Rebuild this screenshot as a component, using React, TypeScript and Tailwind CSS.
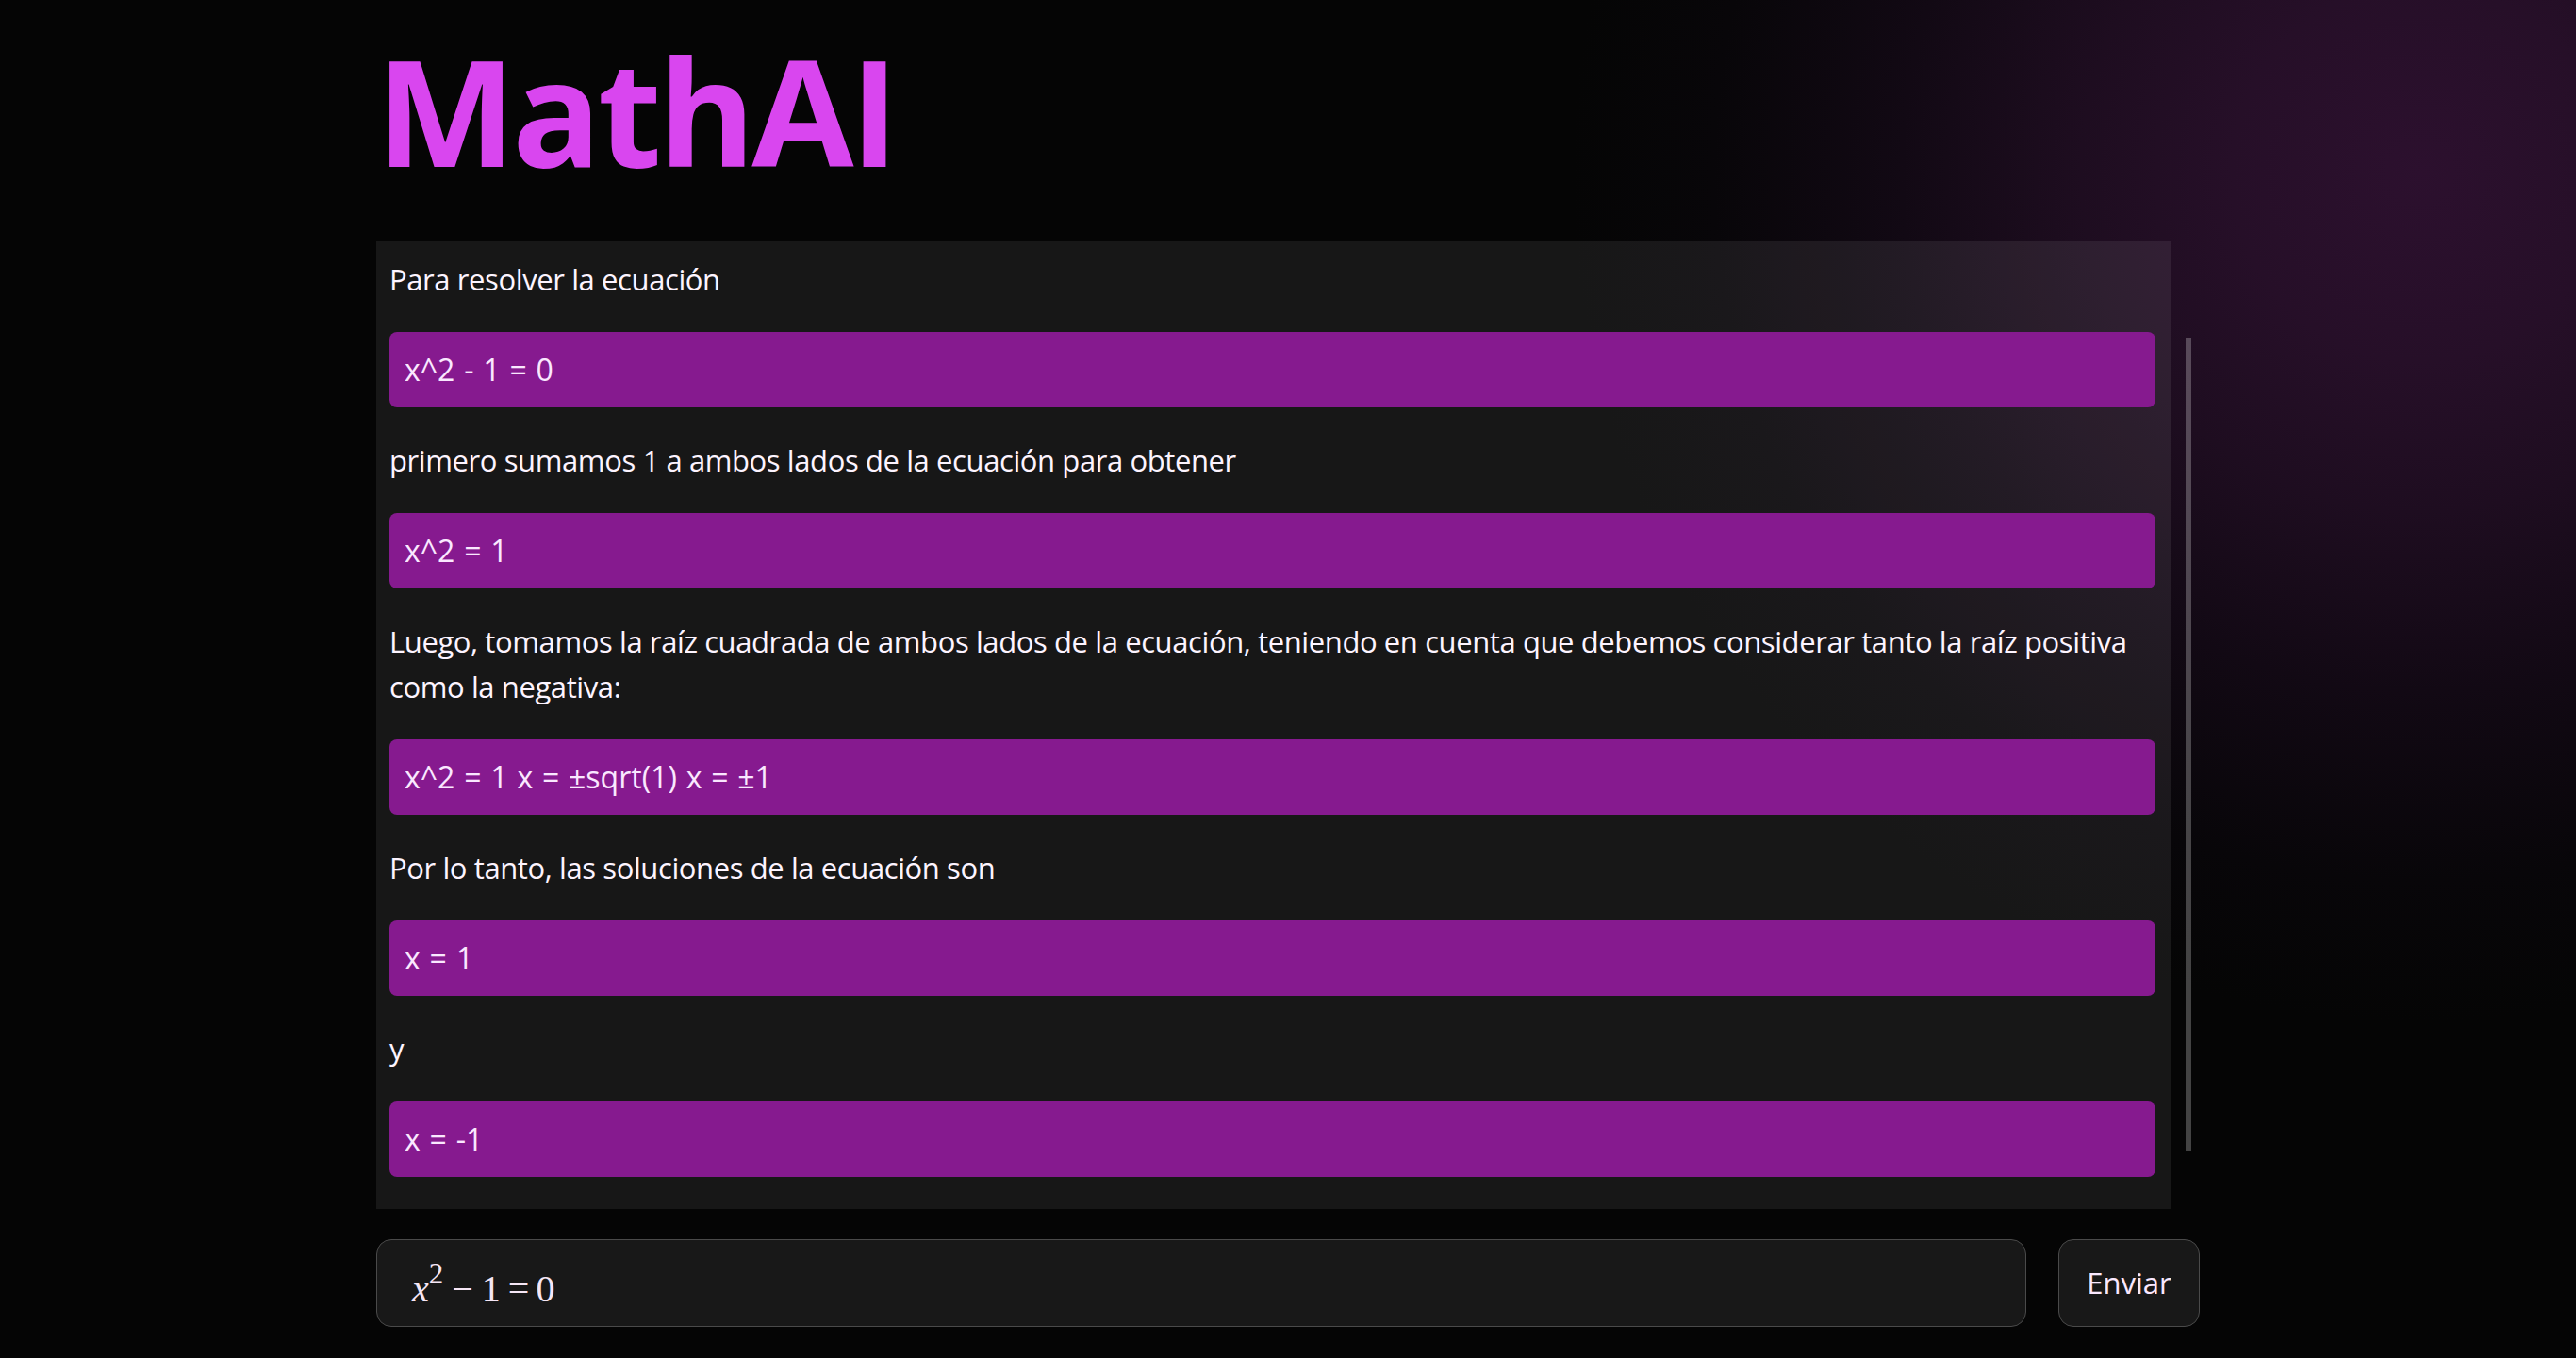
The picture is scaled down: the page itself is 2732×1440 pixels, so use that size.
import React from "react";

const Para = ({ children }: { children: React.ReactNode }) => (
  <p className="my-8 text-[31px] leading-[48px] tracking-[-0.4px] text-[#fdf4ff]">{children}</p>
);

const Code = ({ children }: { children: React.ReactNode }) => (
  <div className="my-8 rounded-lg bg-[#861a8f] py-4 pl-4 text-[32px] leading-[48px] tracking-[0px] text-[#fae8ff] [word-spacing:1.5px]">
    {children}
  </div>
);

export default function App() {
  return (
    <div
      className="min-h-screen w-full bg-[#050505]"
      style={{
        backgroundImage:
          "radial-gradient(circle at 2567px 183px, rgba(44,16,46,1) 0px, rgba(38,15,40,1) 200px, rgba(30,13,32,1) 360px, rgba(18,9,20,1) 550px, rgba(8,6,9,1) 750px, rgba(5,5,5,1) 900px)",
        fontFamily: '"Open Sans", "Noto Sans", sans-serif',
      }}
    >
      <div className="mx-auto flex h-[1440px] w-[1934px] flex-col">
        <h1 className="mt-[38px] h-[218px] text-[157px] font-bold leading-none tracking-[-4px] text-[#d946ef]">
          MathAI
        </h1>
        <div className="flex h-[1026px] gap-[15px]">
          <div className="h-full w-[1904px] shrink-0 overflow-hidden bg-white/[0.075] pl-[14px] pr-[17px] pt-4">
            <p className="mb-8 text-[31px] leading-[48px] tracking-[-0.4px] text-[#fdf4ff]">
              Para resolver la ecuación
            </p>
            <Code>x^2 - 1 = 0</Code>
            <Para>primero sumamos 1 a ambos lados de la ecuación para obtener</Para>
            <Code>x^2 = 1</Code>
            <Para>
              Luego, tomamos la raíz cuadrada de ambos lados de la ecuación, teniendo en cuenta que debemos considerar tanto la raíz positiva como la negativa:
            </Para>
            <Code>x^2 = 1 x = ±sqrt(1) x = ±1</Code>
            <Para>Por lo tanto, las soluciones de la ecuación son</Para>
            <Code>x = 1</Code>
            <Para>y</Para>
            <Code>x = -1</Code>
          </div>
          <div className="pt-[102px]">
            <div className="h-[862px] w-[6px] bg-white/25" />
          </div>
        </div>
        <div className="mt-[32px] flex h-[93px] gap-[34px]">
          <div className="flex flex-1 items-center rounded-2xl border-[1.5px] border-[#4a4a4a] bg-[#181818] pl-[37px] pt-[12px]">
            <span
              className="text-[40px] leading-none text-[#f5e6f5]"
              style={{ fontFamily: '"Liberation Serif", serif' }}
            >
              <i>x</i>
              <sup className="-top-[19px] text-[31px]">2</sup>
              <span className="ml-[9px]">−</span>
              <span className="ml-[9px]">1</span>
              <span className="ml-[8px]">=</span>
              <span className="ml-[7px]">0</span>
            </span>
          </div>
          <button className="w-[150px] shrink-0 rounded-2xl border-[1.5px] border-[#4a4a4a] bg-[#181818] text-[31px] text-[#fae8ff]">
            Enviar
          </button>
        </div>
      </div>
    </div>
  );
}
